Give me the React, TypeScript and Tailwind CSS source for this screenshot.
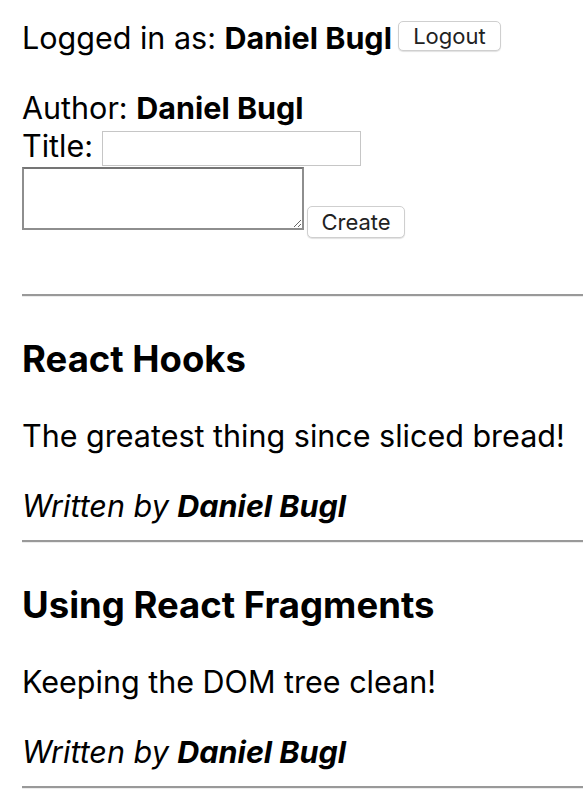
import React from "react";

function Hr() {
  return <div className="h-[3px] w-full border-t-2 border-b border-t-[#999999] border-b-[#ececec]" />;
}

function Post({ title, content }: { title: string; content: string }) {
  return (
    <div>
      <h3 className="mt-[42px] h-[40px] text-[36.5px] font-bold leading-[40px]">{title}</h3>
      <div className="mt-[39px] h-[35px] leading-[35px]">{content}</div>
      <div className="h-[35px]" />
      <div className="h-[35px] leading-[35px] italic">
        Written by <b className="font-bold">Daniel Bugl</b>
      </div>
      <div className="h-[17px]" />
      <Hr />
    </div>
  );
}

export default function App() {
  return (
    <div
      className="min-h-[808px] bg-white pl-[22px] pt-[20px] text-[30.5px] text-black"
      style={{ fontFamily: "Inter, 'Noto Sans', sans-serif" }}
    >
      <div className="flex h-[35px] items-center whitespace-nowrap">
        <span>
          Logged in as: <b className="font-bold">Daniel Bugl</b>
        </span>
        <button className="mb-[3px] ml-[6px] h-[30px] w-[103px] rounded-[5px] border border-[#cfcfcf] bg-white text-[22px] leading-none text-[#222] shadow-[0_1px_1px_rgba(0,0,0,0.12)]">
          Logout
        </button>
      </div>
      <div className="h-[35px]" />
      <div className="flex h-[35px] items-center whitespace-nowrap">
        <span>
          Author: <b className="font-bold">Daniel Bugl</b>
        </span>
      </div>
      <div className="flex h-[42px] items-end whitespace-nowrap">
        <span className="mb-[4px] leading-[35px]">Title:</span>
        <input
          type="text"
          className="mb-[1px] ml-[9px] h-[35px] w-[259px] border border-[#c6c6c6] bg-white outline-none"
        />
      </div>
      <div className="flex items-start">
        <textarea className="h-[63px] w-[282px] border-2 border-[#8e8e8e] border-t-[#757575] bg-white outline-none" />
        <button className="ml-[3px] mt-[39px] h-[32px] w-[98px] rounded-[5px] border border-[#cfcfcf] bg-white text-[22px] leading-none text-[#222] shadow-[0_1px_1px_rgba(0,0,0,0.12)]">
          Create
        </button>
      </div>
      <div className="h-[56px]" />
      <Hr />
      <Post title="React Hooks" content="The greatest thing since sliced bread!" />
      <Post title="Using React Fragments" content="Keeping the DOM tree clean!" />
    </div>
  );
}
